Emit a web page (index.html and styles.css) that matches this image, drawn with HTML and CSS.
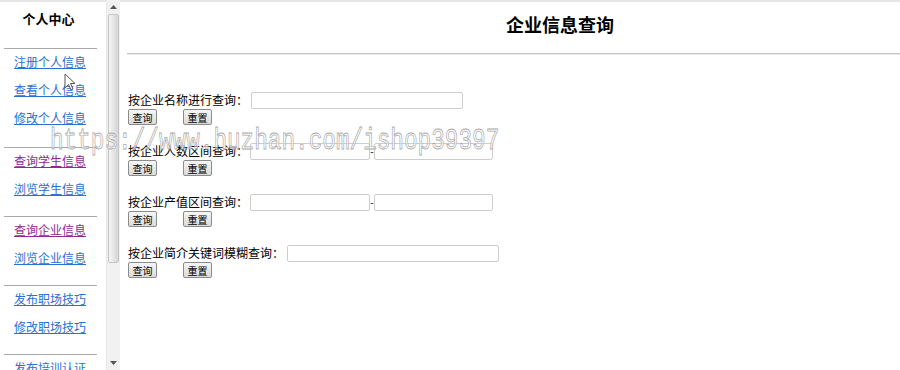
FILE: index.html
```html
<!DOCTYPE html>
<html lang="zh-CN">
<head>
<meta charset="utf-8">
<title>企业信息查询</title>
<link rel="stylesheet" href="styles.css">
</head>
<body>
<div class="topline"></div>
<div class="layout">
  <aside class="side">
    <h3 class="side-title">个人中心</h3>
    <div class="group">
      <a class="link" href="#">注册个人信息</a>
      <a class="link" href="#">查看个人信息</a>
      <a class="link" href="#">修改个人信息</a>
    </div>
    <div class="group">
      <a class="link visited" href="#">查询学生信息</a>
      <a class="link" href="#">浏览学生信息</a>
    </div>
    <div class="group">
      <a class="link visited" href="#">查询企业信息</a>
      <a class="link" href="#">浏览企业信息</a>
    </div>
    <div class="group">
      <a class="link" href="#">发布职场技巧</a>
      <a class="link" href="#">修改职场技巧</a>
    </div>
    <div class="group">
      <a class="link" href="#">发布培训认证</a>
    </div>
  </aside>
  <div class="scrollbar">
    <div class="sb-btn"><svg width="7" height="4" viewBox="0 0 7 4"><path d="M3.5 0 L7 4 L0 4 Z" fill="#555"/></svg></div>
    <div class="sb-track"><div class="sb-thumb"></div></div>
    <div class="sb-btn"><svg width="7" height="4" viewBox="0 0 7 4"><path d="M0 0 L7 0 L3.5 4 Z" fill="#555"/></svg></div>
  </div>
  <main class="main">
    <h2 class="main-title">企业信息查询</h2>
    <div class="rule"></div>
    <form class="form">
      <div class="block">
        <div class="row"><span class="label">按企业名称进行查询：</span><input class="field wide" type="text"></div>
        <div class="btns"><button class="btn" type="button">查询</button><button class="btn reset" type="reset">重置</button></div>
      </div>
      <div class="block">
        <div class="row"><span class="label">按企业人数区间查询：</span><input class="field half" type="text"><span class="dash">-</span><input class="field half2" type="text"></div>
        <div class="btns"><button class="btn" type="button">查询</button><button class="btn reset" type="reset">重置</button></div>
      </div>
      <div class="block">
        <div class="row"><span class="label">按企业产值区间查询：</span><input class="field half" type="text"><span class="dash">-</span><input class="field half2" type="text"></div>
        <div class="btns"><button class="btn" type="button">查询</button><button class="btn reset" type="reset">重置</button></div>
      </div>
      <div class="block">
        <div class="row"><span class="label">按企业简介关键词模糊查询：</span><input class="field wide" type="text"></div>
        <div class="btns"><button class="btn" type="button">查询</button><button class="btn reset" type="reset">重置</button></div>
      </div>
    </form>
  </main>
</div>
<div class="watermark">https://www.huzhan.com/ishop39397</div>
<svg class="cursor" width="12" height="19" viewBox="0 0 12 19"><path d="M1 1 L1 15 L4.5 11.5 L7 17 L9 16 L6.5 10.5 L11 10.5 Z" fill="#fff" stroke="#555" stroke-width="1"/></svg>
</body>
</html>
```
FILE: styles.css
```css
html, body {
  margin: 0;
  padding: 0;
  width: 900px;
  height: 370px;
  overflow: hidden;
  background: #fff;
  font-family: "Noto Sans CJK SC", "Noto Sans", sans-serif;
  font-size: 12px;
  color: #000;
}

.topline {
  height: 2px;
  background: #e6e6e6;
}

.layout {
  display: flex;
  height: 368px;
}

.side {
  width: 106px;
  flex: none;
  overflow: hidden;
}

.side-title {
  margin: 0;
  height: 46px;
  line-height: 34px;
  width: 97px;
  text-align: center;
  font-size: 13px;
  font-weight: bold;
}

.group {
  margin-left: 4px;
  width: 93px;
  border-top: 1px solid #a9a9a9;
  padding-bottom: 12px;
}

.group:first-of-type {
  padding-bottom: 14px;
}

.link {
  display: block;
  height: 28px;
  line-height: 26px;
  padding-left: 10px;
  color: #2a6fd4;
  text-decoration: underline;
  font-size: 12px;
  white-space: nowrap;
}

.link.visited {
  color: #8e2a92;
}

.scrollbar {
  width: 14px;
  flex: none;
  margin-top: -2px;
  height: 370px;
  display: flex;
  flex-direction: column;
  background: #f1f1f1;
  border-left: 1px solid #e8e8e8;
  box-sizing: border-box;
}

.sb-btn {
  height: 14px;
  display: flex;
  align-items: center;
  justify-content: center;
  flex: none;
}

.sb-track {
  flex: 1;
  display: flex;
  flex-direction: column;
}

.sb-thumb {
  height: 247px;
  margin: 0 1px;
  border: 1px solid #c4c4c4;
  border-radius: 2px;
  background: linear-gradient(to right, #f6f6f6, #e2e2e2 60%, #d6d6d6);
}

.main {
  flex: 1;
  min-width: 0;
}

.main-title {
  margin: 0;
  height: 51px;
  line-height: 44px;
  text-align: center;
  padding-left: 100px;
  font-size: 18px;
  font-weight: bold;
}

.rule {
  margin-left: 7px;
  border-top: 1px solid #c2c2c2;
  border-bottom: 1px solid #ececec;
}

.form {
  padding: 36px 0 0 8px;
  margin: 0;
}

.block {
  height: 51px;
}

.row {
  display: flex;
  align-items: center;
  height: 18px;
}

.label {
  white-space: nowrap;
  line-height: 18px;
}

.field {
  height: 17px;
  box-sizing: border-box;
  border: 1px solid #cdcdcd;
  border-radius: 2px;
  padding: 0 2px;
  margin: 0 0 0 2px;
  background: #fff;
  font-size: 12px;
}

.field.wide { width: 212px; margin-left: 3px; }
.field.half { width: 120px; }
.field.half2 { width: 119px; margin-left: 0; }

.dash {
  width: 4px;
  text-align: center;
  font-size: 10px;
  line-height: 10px;
  overflow: hidden;
}

.btns {
  display: flex;
  height: 16px;
}

.btn {
  width: 29px;
  height: 16px;
  padding: 0;
  margin: 0;
  box-sizing: border-box;
  border: 1px solid #8b8b8b;
  border-radius: 2px;
  background: linear-gradient(#f6f6f6, #dadada);
  font-family: "Noto Sans CJK SC", sans-serif;
  font-size: 10px;
  line-height: 13px;
  color: #000;
}

.btn.reset {
  margin-left: 26px;
}

.watermark {
  position: absolute;
  left: 50px;
  top: 122px;
  font-family: "Liberation Mono", monospace;
  font-size: 22.7px;
  line-height: 30px;
  color: rgba(255, 255, 255, 0.6);
  -webkit-text-stroke: 0.6px #a8a8a8;
  transform: scaleY(1.3);
  transform-origin: left top;
  white-space: nowrap;
  pointer-events: none;
}

.cursor {
  position: absolute;
  left: 64px;
  top: 73px;
}
```
